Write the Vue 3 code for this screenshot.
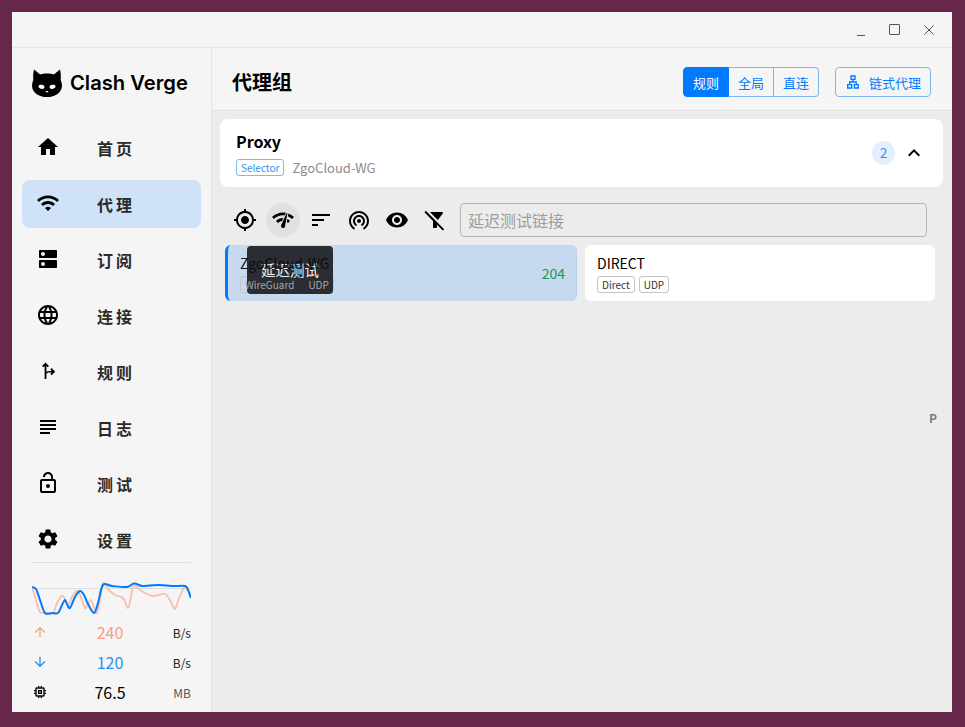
<script setup>
const icons = {
  home: "M10 20v-6h4v6h5v-8h3L12 3 2 12h3v8z",
  wifi: "M1 9l2 2c4.97-4.97 13.03-4.97 18 0l2-2C16.93 2.93 7.08 2.93 1 9zm8 8l3 3 3-3c-1.65-1.66-4.34-1.66-6 0zm-4-4l2 2c2.76-2.76 7.24-2.76 10 0l2-2C15.14 9.14 8.87 9.14 5 13z",
  dns: "M20 13H4c-.55 0-1 .45-1 1v6c0 .55.45 1 1 1h16c.55 0 1-.45 1-1v-6c0-.55-.45-1-1-1zM7 19c-1.1 0-2-.9-2-2s.9-2 2-2 2 .9 2 2-.9 2-2 2zM20 3H4c-.55 0-1 .45-1 1v6c0 .55.45 1 1 1h16c.55 0 1-.45 1-1V4c0-.55-.45-1-1-1zM7 9c-1.1 0-2-.9-2-2s.9-2 2-2 2 .9 2 2-.9 2-2 2z",
  language: "M11.99 2C6.47 2 2 6.48 2 12s4.47 10 9.99 10C17.52 22 22 17.52 22 12S17.52 2 11.99 2zm6.93 6h-2.95c-.32-1.25-.78-2.45-1.38-3.56 1.84.63 3.37 1.91 4.33 3.56zM12 4.04c.83 1.2 1.48 2.53 1.91 3.96h-3.82c.43-1.43 1.08-2.76 1.91-3.96zM4.26 14C4.1 13.36 4 12.69 4 12s.1-1.36.26-2h3.38c-.08.66-.14 1.32-.14 2s.06 1.34.14 2H4.26zm.82 2h2.95c.32 1.25.78 2.45 1.38 3.56-1.84-.63-3.37-1.9-4.33-3.56zm2.95-8H5.08c.96-1.66 2.49-2.93 4.33-3.56C8.81 5.55 8.35 6.75 8.03 8zM12 19.96c-.83-1.2-1.48-2.53-1.91-3.96h3.82c-.43 1.43-1.08 2.76-1.91 3.96zM14.34 14H9.66c-.09-.66-.16-1.32-.16-2s.07-1.35.16-2h4.68c.09.65.16 1.32.16 2s-.07 1.34-.16 2zm.25 5.56c.6-1.11 1.06-2.31 1.38-3.56h2.95c-.96 1.65-2.49 2.93-4.33 3.56zM16.36 14c.08-.66.14-1.32.14-2s-.06-1.34-.14-2h3.38c.16.64.26 1.31.26 2s-.1 1.36-.26 2h-3.38z",
  fork: "M9.5 3.5 6 7l1.3 1.3L8.6 7v13h1.8v-5.2c.9-.9 2-1.3 3.3-1.3h2.1l-1.5 1.5 1.3 1.3 3.6-3.6-3.6-3.6-1.3 1.3 1.5 1.5h-2.1c-1.2 0-2.4.3-3.3.9V7l1.3 1.3L13 7z",
  subject: "M14 17H4v2h10v-2zm6-8H4v2h16V9zM4 15h16v-2H4v2zM4 5v2h16V5H4z",
  lock: "M12 17c1.1 0 2-.9 2-2s-.9-2-2-2-2 .9-2 2 .9 2 2 2zm6-9h-1V6c0-2.76-2.24-5-5-5S7 3.24 7 6h1.9c0-1.71 1.39-3.1 3.1-3.1 1.71 0 3.1 1.39 3.1 3.1v2H6c-1.1 0-2 .9-2 2v10c0 1.1.9 2 2 2h12c1.1 0 2-.9 2-2V10c0-1.1-.9-2-2-2zm0 12H6V10h12v10z",
  settings: "M19.14 12.94c.04-.3.06-.61.06-.94 0-.32-.02-.64-.07-.94l2.03-1.58c.18-.14.23-.41.12-.61l-1.92-3.32c-.12-.22-.37-.29-.59-.22l-2.39.96c-.5-.38-1.03-.7-1.62-.94l-.36-2.54c-.04-.24-.24-.41-.48-.41h-3.84c-.24 0-.43.17-.47.41l-.36 2.54c-.59.24-1.13.57-1.62.94l-2.39-.96c-.22-.08-.47 0-.59.22L2.74 8.87c-.12.21-.08.47.12.61l2.03 1.58c-.05.3-.09.63-.09.94s.02.64.07.94l-2.03 1.58c-.18.14-.23.41-.12.61l1.92 3.32c.12.22.37.29.59.22l2.39-.96c.5.38 1.03.7 1.62.94l.36 2.54c.05.24.24.41.48.41h3.84c.24 0 .44-.17.47-.41l.36-2.54c.59-.24 1.13-.56 1.62-.94l2.39.96c.22.08.47 0 .59-.22l1.92-3.32c.12-.22.07-.47-.12-.61l-2.01-1.58zM12 15.6c-1.98 0-3.6-1.62-3.6-3.6s1.62-3.6 3.6-3.6 3.6 1.62 3.6 3.6-1.62 3.6-3.6 3.6z",
  gps: "M12 8c-2.21 0-4 1.79-4 4s1.79 4 4 4 4-1.79 4-4-1.79-4-4-4zm8.94 3c-.46-4.17-3.77-7.48-7.94-7.94V1h-2v2.06C6.83 3.52 3.52 6.83 3.06 11H1v2h2.06c.46 4.17 3.77 7.48 7.94 7.94V23h2v-2.06c4.17-.46 7.48-3.77 7.94-7.94H23v-2h-2.06zM12 19c-3.87 0-7-3.13-7-7s3.13-7 7-7 7 3.13 7 7-3.13 7-7 7z",
  network: "M15.9 5c-.17 0-.32.09-.41.23l-.07.15-5.18 11.65c-.16.29-.26.61-.26.96 0 1.11.9 2.01 2.01 2.01.96 0 1.77-.68 1.96-1.59l.01-.03L16.4 5.5c0-.28-.22-.5-.5-.5zM1 9l2 2c2.88-2.88 6.79-4.08 10.53-3.62l1.19-2.68C9.89 3.84 4.74 5.27 1 9zm20 2 2-2c-1.64-1.64-3.55-2.82-5.59-3.57l-.53 2.82c1.5.62 2.9 1.53 4.12 2.75zm-4 4 2-2c-.8-.8-1.7-1.42-2.66-1.89l-.55 2.92c.42.27.83.59 1.21.97zM5 13l2 2c1.13-1.13 2.56-1.79 4.03-2l1.28-2.88c-2.63-.08-5.3.87-7.31 2.88z",
  sort: "M3 18h6v-2H3v2zM3 6v2h18V6H3zm0 7h12v-2H3v2z",
  tether: "M12 11c-1.1 0-2 .9-2 2s.9 2 2 2 2-.9 2-2-.9-2-2-2zm6 2c0-3.31-2.69-6-6-6s-6 2.69-6 6c0 2.22 1.21 4.15 3 5.19l1-1.74c-1.19-.7-2-1.97-2-3.45 0-2.21 1.79-4 4-4s4 1.79 4 4c0 1.48-.81 2.75-2 3.45l1 1.74c1.79-1.04 3-2.97 3-5.19zM12 3C6.48 3 2 7.48 2 13c0 3.7 2.01 6.92 4.99 8.65l1-1.73C5.61 18.53 4 15.96 4 13c0-4.42 3.58-8 8-8s8 3.58 8 8c0 2.96-1.61 5.53-4 6.92l1 1.73c2.99-1.73 5-4.95 5-8.65 0-5.52-4.48-10-10-10z",
  eye: "M12 4.5C7 4.5 2.73 7.61 1 12c1.73 4.39 6 7.5 11 7.5s9.27-3.11 11-7.5c-1.73-4.39-6-7.5-11-7.5zM12 17c-2.76 0-5-2.24-5-5s2.24-5 5-5 5 2.24 5 5-2.24 5-5 5zm0-8c-1.66 0-3 1.34-3 3s1.34 3 3 3 3-1.34 3-3-1.34-3-3-3z",
  filterOff: "M19.79 5.61C20.3 4.95 19.83 4 19 4H6.83l7.97 7.97 4.99-6.36zM2.81 2.81 1.39 4.22 10 13v6c0 .55.45 1 1 1h2c.55 0 1-.45 1-1v-2.17l5.78 5.78 1.41-1.41L2.81 2.81z",
  lan: "M13 22h8v-7h-3v-4h-5V9h3V2H8v7h3v2H6v4H3v7h8v-7H8v-2h8v2h-3v7zM10 7V4h4v3h-4zM5 20v-3h4v3H5zm14 0h-4v-3h4v3z",
  memory: "M15 9H9v6h6V9zm-2 4h-2v-2h2v2zm8-2V9h-2V7c0-1.1-.9-2-2-2h-2V3h-2v2h-2V3H9v2H7c-1.1 0-2 .9-2 2v2H3v2h2v2H3v2h2v2c0 1.1.9 2 2 2h2v2h2v-2h2v2h2v-2h2c1.1 0 2-.9 2-2v-2h2v-2h-2v-2h2zm-4 6H7V7h10v10z",
  up: "M4 12l1.41 1.41L11 7.83V20h2V7.83l5.58 5.59L20 12l-8-8-8 8z",
  down: "M20 12l-1.41-1.41L13 16.17V4h-2v12.17l-5.58-5.59L4 12l8 8 8-8z",
  expand: "M12 8l-6 6 1.41 1.41L12 10.83l4.59 4.58L18 14z",
};

const navItems = [
  { label: "首页", icon: "home" },
  { label: "代理", icon: "wifi", active: true },
  { label: "订阅", icon: "dns" },
  { label: "连接", icon: "language" },
  { label: "规则", icon: "fork" },
  { label: "日志", icon: "subject" },
  { label: "测试", icon: "lock" },
  { label: "设置", icon: "settings" },
];

const tools = [
  { icon: "gps" },
  { icon: "network", hover: true },
  { icon: "sort" },
  { icon: "tether" },
  { icon: "eye" },
  { icon: "filterOff" },
];

const modes = [
  { label: "规则", active: true },
  { label: "全局" },
  { label: "直连" },
];

const proxies = [
  { name: "ZgoCloud-WG", tags: ["WireGuard", "UDP"], delay: 204, selected: true },
  { name: "DIRECT", tags: ["Direct", "UDP"] },
];

const stats = [
  { icon: "up", value: "240", unit: "B/s", kind: "up" },
  { icon: "down", value: "120", unit: "B/s", kind: "down" },
  { icon: "memory", value: "76.5", unit: "MB", kind: "mem" },
];

// smooth line through the sample points
const smooth = (pts) => {
  let d = `M${pts[0][0]} ${pts[0][1]}`;
  for (let i = 0; i < pts.length - 1; i++) {
    const p0 = pts[i - 1] ?? pts[i];
    const p1 = pts[i];
    const p2 = pts[i + 1];
    const p3 = pts[i + 2] ?? p2;
    const c1 = [p1[0] + (p2[0] - p0[0]) / 6, p1[1] + (p2[1] - p0[1]) / 6];
    const c2 = [p2[0] - (p3[0] - p1[0]) / 6, p2[1] - (p3[1] - p1[1]) / 6];
    d += ` C${c1[0]} ${c1[1]} ${c2[0]} ${c2[1]} ${p2[0]} ${p2[1]}`;
  }
  return d;
};

const upPath = smooth([
  [32, 587], [36, 600], [40, 612], [46, 613], [53, 613], [57, 603], [62, 596], [65, 599], [68, 606], [72, 597], [77, 591],
  [81, 597], [85, 608], [88, 604], [91, 600], [94, 607], [97, 613], [100, 600], [103, 583], [109, 590], [115, 595],
  [123, 598], [128, 608], [131, 597], [134, 586], [143, 592], [153, 596], [165, 594], [171, 602], [175, 609], [179, 598],
  [184, 588], [188, 590], [191, 597],
]);
const downPath = smooth([
  [32, 587], [36, 589], [40, 600], [45, 613], [52, 613], [58, 613], [62, 605], [65, 600], [67, 604], [70, 608], [75, 597],
  [80, 591], [84, 595], [88, 604], [94, 613], [98, 603], [103, 585], [112, 586], [127, 587], [134, 583.5], [142, 586],
  [150, 585.5], [160, 585], [172, 586], [185, 586], [188, 590], [191, 598],
]);
</script>

<template>
  <div class="desktop">
    <div class="window">
      <div class="titlebar">
        <span class="win-min"></span>
        <span class="win-max"></span>
        <svg class="win-close" viewBox="0 0 10 10">
          <path d="M.5.5l9 9M9.5.5l-9 9" />
        </svg>
      </div>

      <div class="body">
        <aside class="sidebar">
          <div class="logo">
            <svg class="cat" viewBox="0 0 30 28">
              <path
                fill="#000"
                d="M2 .6 8.2 5.4C10 4.8 12.4 4.4 15 4.4s5 .4 6.8 1L28 .6c.8 3 1 7 .7 10.4 .8 1.8 1.3 3.6 1.3 5.4C30 23.4 23.2 28 15 28S0 23.4 0 16.4c0-1.8.5-3.6 1.3-5.4C1 7.6 1.2 3.6 2 .6z"
              />
              <ellipse cx="9.5" cy="17.8" rx="3" ry="2" fill="#fff" transform="rotate(14 9.5 17.8)" />
              <ellipse cx="20.5" cy="17.8" rx="3" ry="2" fill="#fff" transform="rotate(-14 20.5 17.8)" />
              <path d="M13.3 22h3.4L15 23.7z" fill="#fff" />
            </svg>
            <span class="logo-text">Clash Verge</span>
          </div>

          <nav class="nav">
            <div v-for="item in navItems" :key="item.label" class="nav-item" :class="{ active: item.active }">
              <svg class="nav-icon" viewBox="0 0 24 24"><path :d="icons[item.icon]" /></svg>
              <span class="nav-label">{{ item.label }}</span>
            </div>
          </nav>

          <div class="traffic">
            <svg class="graph" viewBox="32 580 159 36">
              <path d="M32 588.5H191" stroke="#dcdcdc" fill="none" />
              <path :d="upPath" stroke="#f9bfa9" stroke-width="1.8" fill="none" />
              <path :d="downPath" stroke="#007aff" stroke-width="2" fill="none" />
            </svg>
            <div v-for="row in stats" :key="row.icon" class="stat" :class="row.kind">
              <svg class="stat-icon" viewBox="0 0 24 24"><path :d="icons[row.icon]" /></svg>
              <span class="stat-value">{{ row.value }}</span>
              <span class="stat-unit">{{ row.unit }}</span>
            </div>
          </div>
        </aside>

        <main class="main">
          <header class="header">
            <h1>代理组</h1>
            <div class="modes">
              <button v-for="mode in modes" :key="mode.label" class="mode" :class="{ active: mode.active }">
                {{ mode.label }}
              </button>
            </div>
            <button class="chain">
              <svg viewBox="0 0 24 24"><path :d="icons.lan" /></svg>
              链式代理
            </button>
          </header>

          <div class="content">
            <section class="group">
              <div class="group-info">
                <div class="group-name">Proxy</div>
                <div class="group-sub">
                  <span class="group-type">Selector</span>
                  <span class="group-now">ZgoCloud-WG</span>
                </div>
              </div>
              <span class="count">2</span>
              <svg class="expand" viewBox="0 0 24 24"><path :d="icons.expand" /></svg>
            </section>

            <div class="toolbar">
              <span v-for="tool in tools" :key="tool.icon" class="tool" :class="{ hover: tool.hover }">
                <svg viewBox="0 0 24 24"><path :d="icons[tool.icon]" /></svg>
              </span>
              <div class="test-url">延迟测试链接</div>
            </div>

            <div class="proxies">
              <div v-for="proxy in proxies" :key="proxy.name" class="proxy" :class="{ selected: proxy.selected }">
                <div class="proxy-info">
                  <div class="proxy-name">{{ proxy.name }}</div>
                  <div class="proxy-tags">
                    <span v-for="tag in proxy.tags" :key="tag" class="tag"><span class="tag-text">{{ tag }}</span></span>
                  </div>
                </div>
                <span v-if="proxy.delay" class="delay">{{ proxy.delay }}</span>
              </div>
              <div class="tooltip">延迟测试</div>
            </div>

            <span class="letter">P</span>
          </div>
        </main>
      </div>
    </div>
  </div>
</template>

<style>
html,
body {
  margin: 0;
  background: #66274b;
}
</style>

<style scoped>
.desktop {
  width: 965px;
  height: 727px;
  box-sizing: border-box;
  padding: 12px 13px 15px 12px;
  background: #66274b;
  font-family: "Noto Sans CJK SC", "Noto Sans", sans-serif;
  color: #000;
  overflow: hidden;
}

.window {
  height: 100%;
  display: flex;
  flex-direction: column;
  background: #f5f5f5;
}

.titlebar {
  flex: none;
  height: 35px;
  border-bottom: 1px solid #e4e4e4;
  display: flex;
  align-items: center;
  justify-content: flex-end;
  padding-right: 18px;
  gap: 24px;
}

.win-min {
  width: 8px;
  height: 1px;
  margin: 12px 0 0;
  background: #555;
}

.win-max {
  width: 9px;
  height: 9px;
  border: 1px solid #555;
  border-radius: 1px;
  margin-right: -1px;
}

.win-close {
  width: 10px;
  height: 10px;
  margin-left: 1px;
}

.win-close path {
  stroke: #555;
  stroke-width: 1;
  fill: none;
}

.body {
  flex: 1;
  display: flex;
  min-height: 0;
}

.sidebar {
  flex: none;
  width: 199px;
  border-right: 1px solid #e6e6e6;
  display: flex;
  flex-direction: column;
}

.logo {
  flex: none;
  height: 76px;
  box-sizing: border-box;
  padding: 21px 0 0 20px;
  display: flex;
  align-items: flex-start;
  gap: 8px;
}

.cat {
  width: 30px;
  height: 28px;
}

.logo-text {
  font-family: "Inter", sans-serif;
  font-size: 20.2px;
  font-weight: 600;
  line-height: 28px;
  white-space: nowrap;
}

.nav {
  flex: 1;
  min-height: 0;
  overflow: hidden;
  padding: 0 10px;
  display: flex;
  flex-direction: column;
  gap: 8px;
}

.nav-item {
  flex: none;
  height: 48px;
  border-radius: 8px;
  display: flex;
  align-items: center;
  padding-left: 14px;
}

.nav-item.active {
  background: #cfe2f7;
}

.nav-icon {
  width: 24px;
  height: 24px;
  margin-top: -2px;
  flex: none;
}

.nav-label {
  margin-left: 37px;
  font-size: 16px;
  font-weight: 700;
  letter-spacing: 3px;
  color: #2a2a2a;
}

.traffic {
  flex: none;
  height: 150px;
  box-sizing: border-box;
  margin: 0 20px;
  border-top: 1px solid #dedede;
  padding-top: 17px;
  display: flex;
  flex-direction: column;
}

.graph {
  width: 159px;
  height: 36px;
  margin-bottom: 1px;
  flex: none;
}

.stat {
  flex: none;
  height: 30px;
  display: grid;
  grid-template-columns: 17px 1fr 32px;
  align-items: center;
}

.stat-icon {
  width: 16px;
  height: 16px;
}

.stat-value {
  text-align: center;
  font-size: 16px;
  margin-left: 12px;
}

.stat-unit {
  font-size: 12px;
  text-align: right;
  color: #222;
}

.stat.up .stat-icon,
.stat.up .stat-value {
  color: #fb9f7f;
  fill: #fb9f7f;
}

.stat.down .stat-icon,
.stat.down .stat-value {
  color: #2b8df5;
  fill: #2b8df5;
}

.stat.mem .stat-unit {
  color: #555;
}

.main {
  flex: 1;
  min-width: 0;
  display: flex;
  flex-direction: column;
}

.header {
  flex: none;
  height: 63px;
  box-sizing: border-box;
  border-bottom: 1px solid #e2e2e2;
  display: flex;
  align-items: center;
  padding: 6px 21px 0 20px;
}

.header h1 {
  margin: 0 auto 0 0;
  font-size: 20px;
  font-weight: 700;
  line-height: 28px;
}

.modes {
  display: flex;
}

.mode {
  width: 45px;
  height: 30px;
  padding: 0;
  background: transparent;
  border: 1px solid #7fb7f5;
  border-left-width: 0;
  color: #007aff;
  font: 13px "Noto Sans CJK SC", sans-serif;
}

.mode:first-child {
  width: 46px;
  border-left-width: 1px;
  border-radius: 4px 0 0 4px;
}

.mode:last-child {
  border-radius: 0 4px 4px 0;
}

.mode.active {
  background: #007aff;
  border-color: #007aff;
  color: #fff;
}

.chain {
  margin-left: 16px;
  width: 96px;
  height: 30px;
  padding: 0;
  display: flex;
  align-items: center;
  justify-content: center;
  gap: 8px;
  background: transparent;
  border: 1px solid #7fb7f5;
  border-radius: 4px;
  color: #007aff;
  font: 13px "Noto Sans CJK SC", sans-serif;
}

.chain svg {
  width: 16px;
  height: 16px;
  fill: #007aff;
}

.content {
  flex: 1;
  position: relative;
  background: #ececec;
  padding: 8px 9px 0 8px;
}

.group {
  height: 68px;
  box-sizing: border-box;
  background: #fff;
  border-radius: 8px;
  display: flex;
  align-items: center;
  padding: 0 17px 0 16px;
}

.group-info {
  margin-right: auto;
}

.group-name {
  font-size: 16px;
  font-weight: 600;
  line-height: 22px;
  margin-bottom: 7px;
}

.group-sub {
  display: flex;
  align-items: center;
  gap: 8px;
  line-height: 18px;
}

.group-type {
  font-size: 10px;
  line-height: 15px;
  padding: 0 4px;
  color: #2f8ff7;
  border: 1px solid #7fb7f5;
  border-radius: 3px;
}

.group-now {
  font-size: 13px;
  color: #8c8c8c;
}

.count {
  width: 23px;
  height: 24px;
  border-radius: 50%;
  background: #e3effd;
  color: #2b8df5;
  font-size: 13px;
  line-height: 24px;
  text-align: center;
  margin-right: 7px;
}

.expand {
  width: 24px;
  height: 24px;
}

.toolbar {
  display: flex;
  align-items: center;
  margin-top: 16px;
  padding-left: 8px;
  gap: 4px;
}

.tool {
  width: 34px;
  height: 34px;
  border-radius: 50%;
  display: flex;
  align-items: center;
  justify-content: center;
}

.tool svg {
  width: 24px;
  height: 24px;
}

.tool.hover {
  background: #e0e0e0;
}

.test-url {
  flex: 1;
  height: 34px;
  box-sizing: border-box;
  margin: 0 16px 0 4px;
  padding-left: 7px;
  border: 1px solid #b4b4b4;
  border-radius: 4px;
  font-size: 16px;
  line-height: 33px;
  color: #9c9c9c;
}

.proxies {
  position: relative;
  display: grid;
  grid-template-columns: 352px 350px;
  gap: 8px;
  margin: 8px 0 0 5px;
}

.proxy {
  height: 56px;
  box-sizing: border-box;
  background: #fff;
  border-radius: 6px;
  padding: 8px 11px 0 12px;
  display: flex;
  align-items: center;
}

.proxy.selected {
  background: #c6d9ee;
  border-left: 3px solid #007aff;
  border-right: 1px solid #b6d2f0;
}

.proxy-info {
  flex: 1;
  min-width: 0;
  align-self: flex-start;
}

.proxy-name {
  font-size: 14px;
  line-height: 20px;
}

.proxy.selected .proxy-name {
  position: relative;
  z-index: 2;
  color: #0c0d0f;
}

.proxy-tags {
  display: flex;
  gap: 4px;
  margin-top: 3px;
}

.tag {
  font-size: 10px;
  line-height: 15px;
  padding: 0 4px;
  border: 1px solid #c4c4c4;
  border-radius: 3px;
  color: #333;
}

.proxy.selected .tag-text {
  position: relative;
  z-index: 2;
  color: #a6a8ab;
}

.delay {
  font-size: 14px;
  color: #1a9a50;
  margin-bottom: 8px;
}

.tooltip {
  position: absolute;
  z-index: 1;
  left: 22px;
  top: 1px;
  width: 86px;
  height: 48px;
  border-radius: 4px;
  background: rgba(24, 26, 30, 0.9);
  color: #f1f1f1;
  font-size: 14.5px;
  line-height: 48px;
  text-align: center;
}

.letter {
  position: absolute;
  right: 15px;
  top: 298px;
  font-size: 12px;
  font-weight: 700;
  color: #7c7c7c;
}
</style>
